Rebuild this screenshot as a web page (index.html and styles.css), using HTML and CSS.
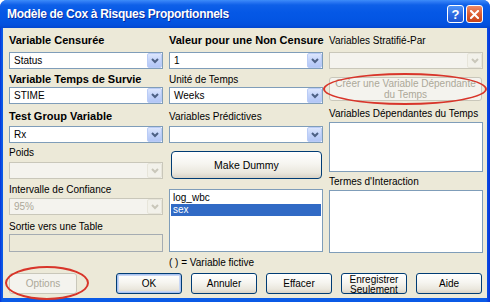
FILE: index.html
```html
<!DOCTYPE html>
<html lang="fr">
<head>
<meta charset="utf-8">
<title>Modèle de Cox à Risques Proportionnels</title>
<link rel="stylesheet" href="styles.css">
</head>
<body>
<div class="window">
  <div class="titlebar">
    <span class="title">Modèle de Cox à Risques Proportionnels</span>
    <div class="caption-btns">
      <span class="cap-btn help">?</span>
      <span class="cap-btn close"><svg width="9" height="9" viewBox="0 0 9 9"><path d="M1 1 L8 8 M8 1 L1 8" stroke="#fff" stroke-width="2" stroke-linecap="square"/></svg></span>
    </div>
  </div>
  <div class="client">
    <div class="columns">
      <div class="col">
        <div class="lbl bold first">Variable Censurée</div>
        <div class="combo after-first"><span class="val">Status</span><span class="drop"><svg width="8" height="6" viewBox="0 0 8 6"><polyline points="1,1 4,4 7,1" fill="none" stroke="#4D6185" stroke-width="2"/></svg></span></div>
        <div class="lbl bold gap4">Variable Temps de Survie</div>
        <div class="combo gap1"><span class="val">STIME</span><span class="drop"><svg width="8" height="6" viewBox="0 0 8 6"><polyline points="1,1 4,4 7,1" fill="none" stroke="#4D6185" stroke-width="2"/></svg></span></div>
        <div class="lbl bold gap6">Test Group Variable</div>
        <div class="combo gap3"><span class="val">Rx</span><span class="drop"><svg width="8" height="6" viewBox="0 0 8 6"><polyline points="1,1 4,4 7,1" fill="none" stroke="#4D6185" stroke-width="2"/></svg></span></div>
        <div class="lbl gap3">Poids</div>
        <div class="combo disabled gap3"><span class="val"></span><span class="drop"><svg width="8" height="6" viewBox="0 0 8 6"><polyline points="1,1 4,4 7,1" fill="none" stroke="#C9C7BA" stroke-width="2"/></svg></span></div>
        <div class="lbl gap4">Intervalle de Confiance</div>
        <div class="combo disabled gap2"><span class="val">95%</span><span class="drop"><svg width="8" height="6" viewBox="0 0 8 6"><polyline points="1,1 4,4 7,1" fill="none" stroke="#C9C7BA" stroke-width="2"/></svg></span></div>
        <div class="lbl gap5">Sortie vers une Table</div>
        <div class="textbox disabled gap1"></div>
      </div>
      <div class="col">
        <div class="lbl bold first">Valeur pour une Non Censure</div>
        <div class="combo after-first"><span class="val">1</span><span class="drop"><svg width="8" height="6" viewBox="0 0 8 6"><polyline points="1,1 4,4 7,1" fill="none" stroke="#4D6185" stroke-width="2"/></svg></span></div>
        <div class="lbl gap4">Unité de Temps</div>
        <div class="combo gap1"><span class="val">Weeks</span><span class="drop"><svg width="8" height="6" viewBox="0 0 8 6"><polyline points="1,1 4,4 7,1" fill="none" stroke="#4D6185" stroke-width="2"/></svg></span></div>
        <div class="lbl gap6">Variables Prédictives</div>
        <div class="combo gap3"><span class="val"></span><span class="drop"><svg width="8" height="6" viewBox="0 0 8 6"><polyline points="1,1 4,4 7,1" fill="none" stroke="#4D6185" stroke-width="2"/></svg></span></div>
        <div class="btn big gap8">Make Dummy</div>
        <div class="listbox vars gap10">
          <div class="item">log_wbc</div>
          <div class="item selected">sex</div>
        </div>
        <div class="lbl gap4">( ) = Variable fictive</div>
      </div>
      <div class="col">
        <div class="lbl first">Variables Stratifié-Par</div>
        <div class="combo disabled after-first"><span class="val"></span><span class="drop"><svg width="8" height="6" viewBox="0 0 8 6"><polyline points="1,1 4,4 7,1" fill="none" stroke="#C9C7BA" stroke-width="2"/></svg></span></div>
        <div class="btn wide disabled gap8">Créer une Variable Dépendante<br>du Temps</div>
        <div class="lbl gap6">Variables Dépendantes du Temps</div>
        <div class="listbox timevars gap2"></div>
        <div class="lbl gap3">Termes d'Interaction</div>
        <div class="listbox terms gap2"></div>
      </div>
    </div>
    <div class="footer">
      <div class="btn disabled options">Options</div>
      <div class="btn default">OK</div>
      <div class="btn">Annuler</div>
      <div class="btn">Effacer</div>
      <div class="btn twoline">Enregistrer<br>Seulement</div>
      <div class="btn">Aide</div>
    </div>
  </div>
  <div class="mark mark-options"></div>
  <div class="mark mark-create"></div>
</div>
</body>
</html>
```
FILE: styles.css
```css
* { box-sizing: border-box; }
html, body { margin: 0; padding: 0; background: #ffffff; }
body {
  width: 490px; height: 302px; overflow: hidden;
  font-family: "Liberation Sans", Arial, sans-serif;
  font-size: 10px; color: #000;
}
.window {
  position: relative;
  width: 490px; height: 302px;
  display: flex; flex-direction: column;
  background: linear-gradient(to right, #0831D9 0, #0A5AE6 2px, #0A5AE6 486px, #0831D9 490px);
  border-radius: 7px 7px 0 0;
  overflow: hidden;
}
.titlebar {
  height: 28px; flex: none;
  display: flex; align-items: center;
  padding: 0 7px 0 7px;
  background: linear-gradient(to bottom, #3D8DF9 0, #2B78F3 2px, #0E60E8 5px, #0558E6 12px, #0355E3 20px, #0350DD 25px, #0246CF 28px);
}
.title {
  flex: 1;
  color: #fff; font-weight: bold; font-size: 12px; letter-spacing: -0.3px;
  text-shadow: 1px 1px 0 #0A2A9A;
  white-space: nowrap;
}
.caption-btns { display: flex; gap: 2px; }
.cap-btn {
  width: 17px; height: 18px;
  border: 1px solid #fff; border-radius: 3px;
  display: flex; align-items: center; justify-content: center;
  color: #fff; font-weight: bold; font-size: 13px;
}
.help { background: linear-gradient(#4F93F7, #2A66E0 60%, #1D56D2); }
.close { background: linear-gradient(#EE8A66, #DB5A2E 55%, #C7441B); }
.client {
  flex: 1;
  margin: 0 3px 4px 3px;
  background: #ECE9D8;
  display: flex; flex-direction: column;
  padding: 6px 4px 4px 6px;
}
.columns { display: flex; gap: 6px; }
.col { width: 154px; display: flex; flex-direction: column; }
.lbl { height: 13px; line-height: 13px; white-space: nowrap; }
.lbl.bold { font-weight: bold; font-size: 11px; }
.after-first { margin-top: 5px; }
.gap1 { margin-top: 1px; }
.gap2 { margin-top: 2px; }
.gap3 { margin-top: 3px; }
.gap4 { margin-top: 4px; }
.gap5 { margin-top: 5px; }
.gap6 { margin-top: 6px; }
.gap8 { margin-top: 8px; }
.gap10 { margin-top: 10px; }
.combo {
  height: 17px; flex: none;
  border: 1px solid #7F9DB9; background: #fff;
  display: flex; align-items: center;
}
.combo .val { flex: 1; padding-left: 4px; }
.drop {
  width: 15px; height: 15px;
  border: 1px solid #BACCF6; border-radius: 2px;
  background: linear-gradient(#DCE6FD, #C3D3FA 50%, #B2C6F6);
  display: flex; align-items: center; justify-content: center;
}
.combo.disabled { background: #F4F3EE; border-color: #C9C7BA; color: #ACA899; }
.combo.disabled .drop { background: #F2F1EA; border-color: #E7E5DA; }
.textbox { height: 18px; border: 1px solid #A5ACB2; background: #ECE9D8; }
.listbox { border: 1px solid #7F9DB9; background: #fff; padding: 2px 1px; }
.listbox.vars { height: 63px; }
.listbox.timevars { height: 50px; }
.listbox.terms { height: 63px; }
.item { height: 12px; line-height: 12px; padding-left: 2px; }
.item.selected { background: #316AC5; color: #fff; }
.btn {
  width: 66px; height: 21px; flex: none;
  border: 1px solid #003C74; border-radius: 3px;
  background: linear-gradient(#FFFFFF, #F6F5F0 45%, #EAE7DD 80%, #D8D2C6);
  display: flex; align-items: center; justify-content: center;
  text-align: center; line-height: 10px;
}
.btn.big { width: 151px; height: 28px; margin-left: 2px; border-radius: 4px; font-size: 10.5px; }
.btn.wide { width: 153px; height: 24px; line-height: 11px; }
.btn.disabled { border-color: #C9C7BA; background: #F4F3EE; color: #ACA899; }
.btn.default { box-shadow: inset 0 0 0 1px #A9C2F0, inset 0 0 0 2px #C8D7F5; }
.btn.twoline { line-height: 10px; overflow: hidden; align-items: flex-start; padding-top: 1px; }
.footer { margin-top: auto; display: flex; gap: 9px; }
.btn.options { width: 68px; margin-right: 30px; }
.mark {
  position: absolute;
  border: 2px solid #D8352A; border-radius: 50%;
}
.mark-options { left: 5px; top: 266px; width: 84px; height: 34px; }
.mark-create { left: 323px; top: 73px; width: 164px; height: 32px; }
```
